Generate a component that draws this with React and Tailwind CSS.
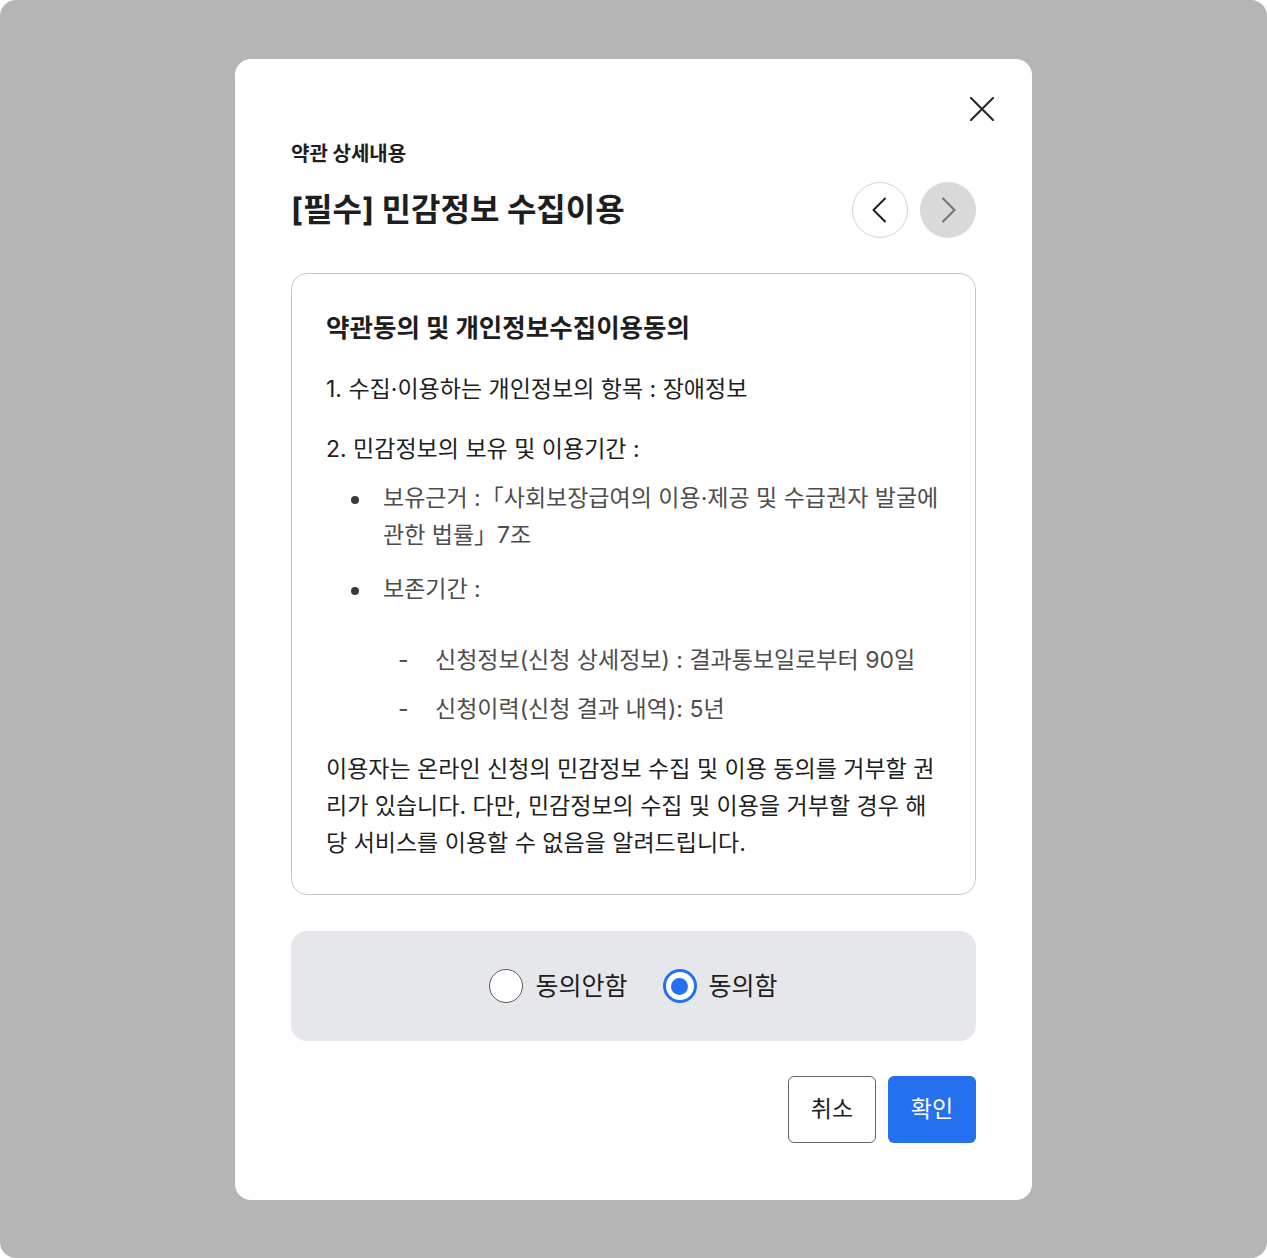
import React, { useState } from 'react';

const font = { fontFamily: 'Inter, "Noto Sans CJK KR", "Noto Sans", sans-serif' };

const Chevron = ({ dir = 'left', className = '' }) => (
  <svg width="16" height="26" viewBox="0 0 16 26" fill="none" className={className}>
    <path
      d={dir === 'left' ? 'M14 1.5 L2.5 13 L14 24.5' : 'M2 1.5 L13.5 13 L2 24.5'}
      stroke="currentColor"
      strokeWidth="2"
      strokeLinecap="round"
      strokeLinejoin="round"
    />
  </svg>
);

const Radio = ({ checked, label, onClick }) => (
  <button type="button" onClick={onClick} className="flex items-center gap-3">
    {checked ? (
      <span className="w-[34px] h-[34px] rounded-full border-[3px] border-[#2570ee] bg-white flex items-center justify-center">
        <span className="w-[17px] h-[17px] rounded-full bg-[#2570ee]" />
      </span>
    ) : (
      <span className="w-[34px] h-[34px] rounded-full border-[1.5px] border-[#555a60] bg-white" />
    )}
    <span className="text-[25px] leading-none text-[#1e1e1e]">{label}</span>
  </button>
);

export default function App() {
  const [agree, setAgree] = useState(true);

  return (
    <div className="bg-white w-[1267px] h-[1258px]" style={font}>
      <div className="w-full h-full rounded-[16px] bg-[#b5b5b5] pt-[59px] flex justify-center">
        <div className="relative w-[797px] h-[1141px] bg-white rounded-[16px] px-14 pt-[82px]">
          {/* close */}
          <button type="button" className="absolute top-[38px] right-[38px] text-[#2b2b2b]" aria-label="닫기">
            <svg width="24" height="24" viewBox="0 0 24 24" fill="none">
              <path d="M1 1 L23 23 M23 1 L1 23" stroke="currentColor" strokeWidth="2.2" strokeLinecap="round" />
            </svg>
          </button>

          <div className="text-[20px] leading-[26px] font-bold text-[#1e1e1e]">약관 상세내용</div>

          <div className="mt-[15px] flex items-center justify-between h-[56px]">
            <h2 className="text-[32px] font-bold text-[#1e1e1e] leading-none">[필수] 민감정보 수집이용</h2>
            <div className="flex gap-3">
              <button type="button" className="w-[56px] h-[56px] rounded-full border border-[#d2d2d2] bg-white flex items-center justify-center text-[#1e1e1e]">
                <Chevron dir="left" className="-ml-[2px]" />
              </button>
              <button type="button" className="w-[56px] h-[56px] rounded-full bg-[#d9d9d9] flex items-center justify-center text-[#707070]">
                <Chevron dir="right" className="ml-[2px]" />
              </button>
            </div>
          </div>

          {/* terms box */}
          <div className="mt-[35px] border border-[#c4c8ce] rounded-[16px] px-[34px] pt-[35px] pb-[32px] text-[23px] leading-[37px] text-[#1e1e1e]">
            <h3 className="text-[25.5px] font-bold leading-[38px]">약관동의 및 개인정보수집이용동의</h3>
            <p className="mt-[24px]">1. 수집·이용하는 개인정보의 항목 : 장애정보</p>
            <p className="mt-[23px]">2. 민감정보의 보유 및 이용기간 :</p>
            <ul className="mt-[12px] text-[#4d4d4d]">
              <li className="flex">
                <span className="w-[57px] shrink-0 flex justify-center pt-[16px]">
                  <span className="w-[8px] h-[8px] rounded-full bg-[#3a3a3a]" />
                </span>
                <span className="whitespace-nowrap">
                  보유근거 :「사회보장급여의 이용·제공 및 수급권자 발굴에
                  <br />
                  관한 법률」7조
                </span>
              </li>
              <li className="flex mt-[17px]">
                <span className="w-[57px] shrink-0 flex justify-center pt-[16px]">
                  <span className="w-[8px] h-[8px] rounded-full bg-[#3a3a3a]" />
                </span>
                <span>보존기간 :</span>
              </li>
            </ul>
            <ul className="mt-[34px] text-[#4d4d4d]">
              <li className="flex">
                <span className="w-[109px] shrink-0 pl-[72px]">-</span>
                <span>신청정보(신청 상세정보) : 결과통보일로부터 90일</span>
              </li>
              <li className="flex mt-[12px]">
                <span className="w-[109px] shrink-0 pl-[72px]">-</span>
                <span>신청이력(신청 결과 내역): 5년</span>
              </li>
            </ul>
            <p className="mt-[23px] whitespace-nowrap">
              이용자는 온라인 신청의 민감정보 수집 및 이용 동의를 거부할 권
              <br />
              리가 있습니다. 다만, 민감정보의 수집 및 이용을 거부할 경우 해
              <br />
              당 서비스를 이용할 수 없음을 알려드립니다.
            </p>
          </div>

          {/* agree radios */}
          <div className="mt-[36px] h-[110px] rounded-[16px] bg-[#e6e7ea] flex items-center justify-center gap-[35px]">
            <Radio checked={!agree} label="동의안함" onClick={() => setAgree(false)} />
            <Radio checked={agree} label="동의함" onClick={() => setAgree(true)} />
          </div>

          {/* actions */}
          <div className="mt-[35px] flex justify-end gap-3">
            <button type="button" className="w-[88px] h-[67px] rounded-[6px] border border-[#60646a] bg-white text-[23px] text-[#1e1e1e]">
              취소
            </button>
            <button type="button" className="w-[88px] h-[67px] rounded-[6px] bg-[#2570ee] text-[23px] text-white">
              확인
            </button>
          </div>
        </div>
      </div>
    </div>
  );
}
